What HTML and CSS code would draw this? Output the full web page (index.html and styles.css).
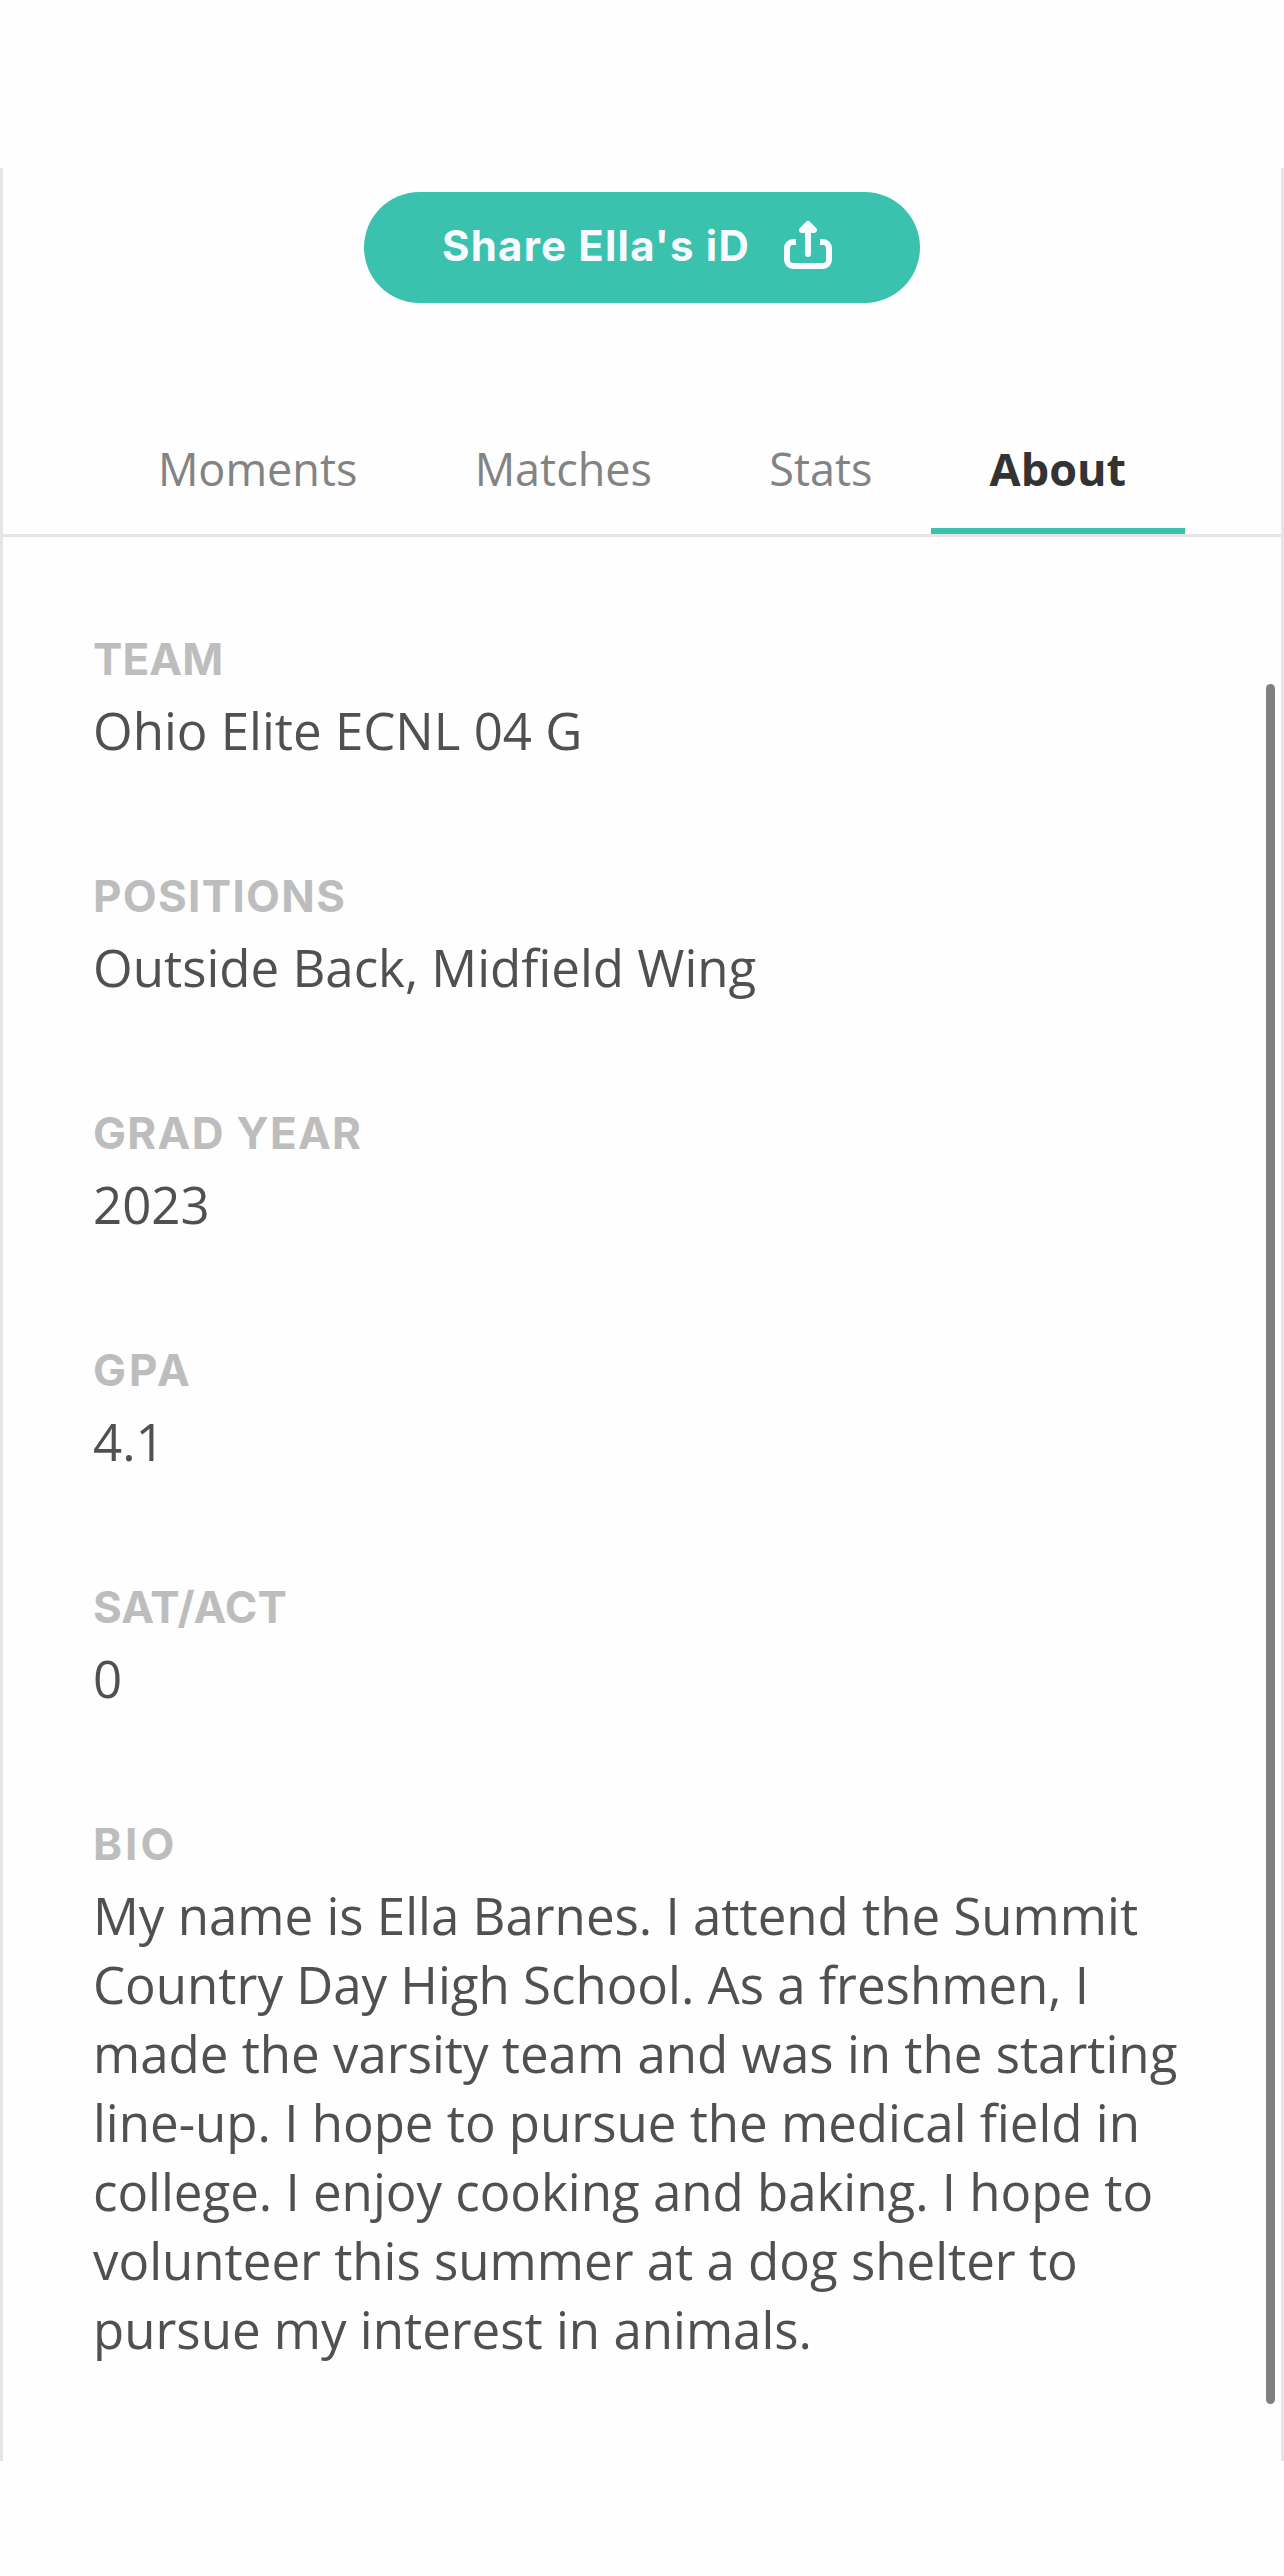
FILE: index.html
```
<!DOCTYPE html>
<html lang="en">
  <head>
    <meta charset="UTF-8" />
    <meta name="viewport" content="width=device-width, initial-scale=1.0" />
    <title>Ella's iD</title>
    <link rel="stylesheet" href="styles.css">
  </head>
  <body>
    <div class="profile">
      <button class="share-btn" type="button">
        <span class="share-text">Share Ella's iD</span>
        <svg class="share-icon" viewBox="0 0 48 50" fill="none" stroke="currentColor" stroke-width="6">
          <path d="M12 22H9a6 6 0 0 0-6 6v12a6 6 0 0 0 6 6h30a6 6 0 0 0 6-6V28a6 6 0 0 0-6-6h-3" />
          <path d="M24 5v29M18 10l6-6 6 6z" stroke-linecap="round" stroke-linejoin="round" />
        </svg>
      </button>
      <nav class="tabs">
        <a class="tab">Moments</a>
        <a class="tab">Matches</a>
        <a class="tab">Stats</a>
        <a class="tab active">About</a>
      </nav>
      <div class="about">
        <div class="field">
          <h2 class="tight">TEAM</h2>
          <p>Ohio Elite ECNL 04 G</p>
        </div>
        <div class="field">
          <h2>POSITIONS</h2>
          <p>Outside Back, Midfield Wing</p>
        </div>
        <div class="field">
          <h2>GRAD YEAR</h2>
          <p>2023</p>
        </div>
        <div class="field">
          <h2 class="wide">GPA</h2>
          <p>4.1</p>
        </div>
        <div class="field">
          <h2 class="tight">SAT/ACT</h2>
          <p>0</p>
        </div>
        <div class="field">
          <h2 class="wide">BIO</h2>
          <p>My name is Ella Barnes. I attend the Summit Country Day High School. As a freshmen, I made the varsity team and was in the starting line-up. I hope to pursue the medical field in college. I enjoy cooking and baking. I hope to volunteer this summer at a dog shelter to pursue my interest in animals.</p>
        </div>
      </div>
      <div class="scrollbar"></div>
    </div>
  </body>
</html>
```
FILE: styles.css
```
* {
  box-sizing: border-box;
}
body {
  margin: 0;
  padding-top: 168px;
  background-color: #fefefe;
  font-family: "Open Sans", sans-serif;
}
.profile {
  position: relative;
  display: flex;
  flex-direction: column;
  height: 2293px;
  border-left: 3px solid #e5e5e5;
  border-right: 3px solid #e5e5e5;
}
.share-btn {
  display: flex;
  align-items: center;
  align-self: center;
  justify-content: space-between;
  width: 556px;
  height: 111px;
  margin-top: 24px;
  padding: 0 88px 5px 78px;
  border: none;
  border-radius: 56px;
  background-color: #3ac2af;
  color: #f7fbff;
}
.share-text {
  font-family: Inter, sans-serif;
  font-size: 42px;
  font-weight: 700;
  letter-spacing: 1.2px;
  white-space: nowrap;
}
.share-icon {
  width: 48px;
  height: 50px;
}
.tabs {
  display: flex;
  justify-content: center;
  height: 234px;
  align-items: flex-end;
  border-bottom: 3px solid #e5e5e5;
}
.tab {
  height: 96px;
  padding: 0 58.6px;
  border-bottom: 6px solid transparent;
  font-size: 45px;
  line-height: 62px;
  color: #838383;
}
.tab.active {
  border-color: #3ac2af;
  font-weight: 700;
  color: #333333;
}
.about {
  display: flex;
  flex-direction: column;
  gap: 101px;
  padding: 92px 90px 0;
}
.field h2 {
  margin: 0 0 7px;
  font-family: Inter, sans-serif;
  font-size: 44px;
  font-weight: 700;
  line-height: 60px;
  letter-spacing: 1.3px;
  color: #bdbdbd;
}
.field h2.tight {
  letter-spacing: 0.1px;
}
.field h2.wide {
  letter-spacing: 3px;
}
.field p {
  margin: 0;
  font-size: 51px;
  line-height: 69px;
  color: #505050;
}
.scrollbar {
  position: absolute;
  top: 516px;
  right: 6px;
  width: 9px;
  height: 1720px;
  border-radius: 5px;
  background-color: #808080;
}
```
